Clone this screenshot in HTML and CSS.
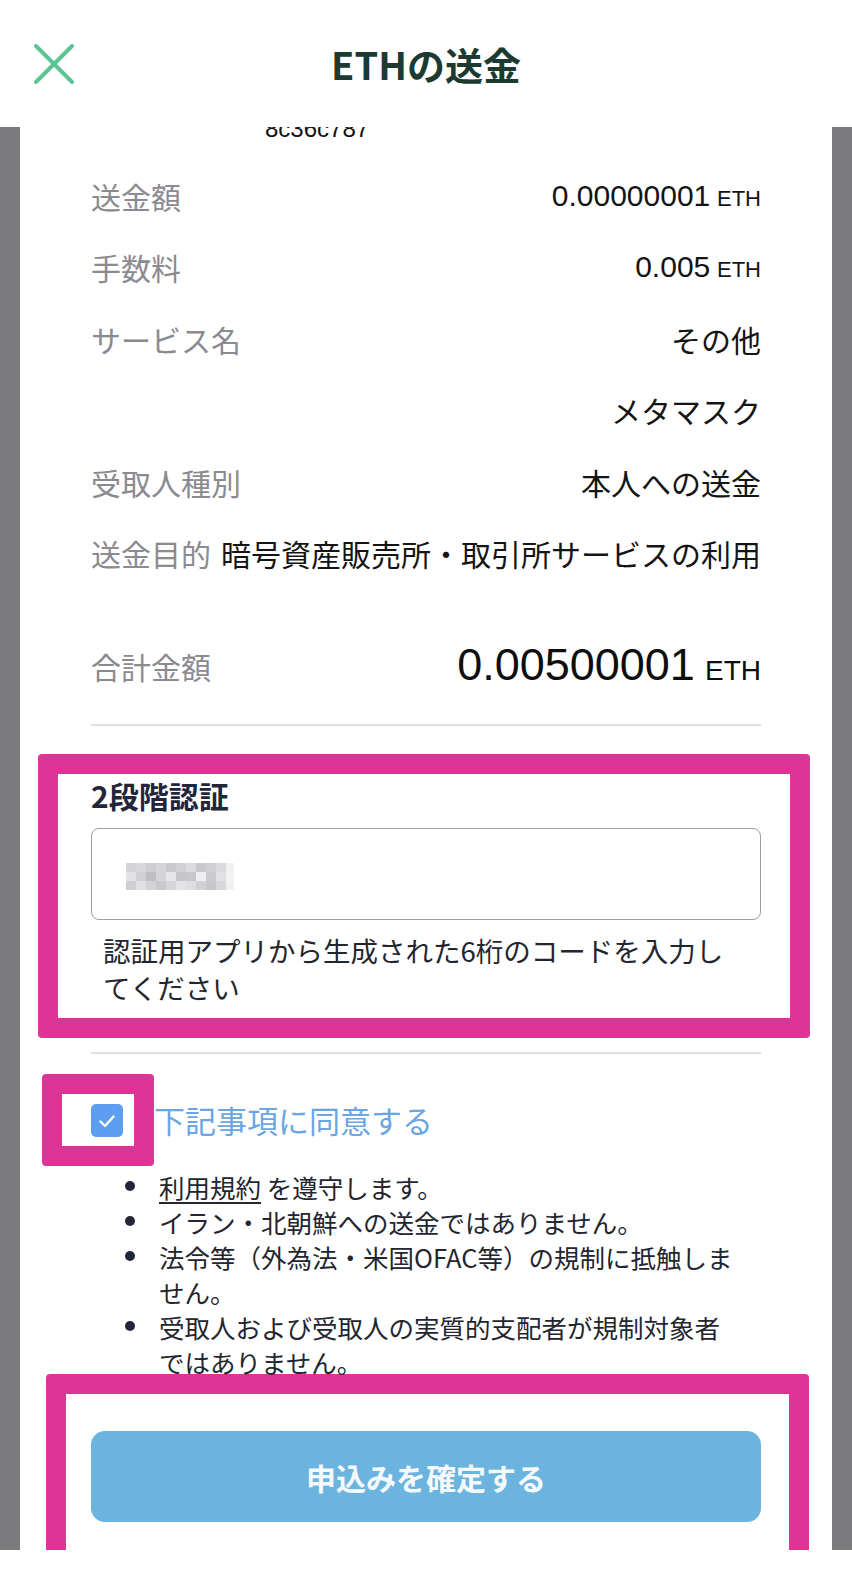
FILE: index.html
```html
<!DOCTYPE html>
<html lang="ja">

<head>
    <meta charset="UTF-8">
    <meta name="viewport" content="width=device-width, initial-scale=1.0">
    <title>ETHの送金</title>
    <link rel="stylesheet" href="styles.css">
</head>

<body>
    <header class="header">
        <button class="close-btn" aria-label="閉じる">
            <svg width="40" height="40" viewBox="0 0 40 40">
                <path d="M2 2 L38 38 M38 2 L2 38" stroke="#5cc596" stroke-width="4" stroke-linecap="round" fill="none"/>
            </svg>
        </button>
        <h1 class="title">ETHの送金</h1>
        <div></div>
    </header>

    <div class="backdrop">
        <div class="card">
            <div class="address num">8c36c787</div>

            <div class="details">
                <div class="row">
                    <span class="label">送金額</span>
                    <span class="value"><span class="num">0.00000001</span> <span class="unit">ETH</span></span>
                </div>
                <div class="row">
                    <span class="label">手数料</span>
                    <span class="value"><span class="num">0.005</span> <span class="unit">ETH</span></span>
                </div>
                <div class="row">
                    <span class="label">サービス名</span>
                    <span class="value">その他</span>
                </div>
                <div class="row">
                    <span class="label"></span>
                    <span class="value">メタマスク</span>
                </div>
                <div class="row">
                    <span class="label">受取人種別</span>
                    <span class="value">本人への送金</span>
                </div>
                <div class="row">
                    <span class="label">送金目的</span>
                    <span class="value">暗号資産販売所・取引所サービスの利用</span>
                </div>
            </div>

            <div class="row total-row">
                <span class="label">合計金額</span>
                <span class="total"><span class="num">0.00500001</span> <span class="unit">ETH</span></span>
            </div>

            <hr class="divider">

            <!-- highlighted: two factor -->
            <section class="mark mark-2fa">
                <div class="mark-inner">
                    <h2 class="section-title">2段階認証</h2>
                    <div class="code-input">
                        <svg class="pixels" width="108" height="27" viewBox="0 0 108 27">
                            <rect x="0" y="0" width="10" height="9" fill="#d4d4d8"/>
                            <rect x="10" y="0" width="10" height="9" fill="#d8d8db"/>
                            <rect x="20" y="0" width="10" height="9" fill="#cfcfd3"/>
                            <rect x="30" y="0" width="10" height="9" fill="#d6d6d9"/>
                            <rect x="40" y="0" width="10" height="9" fill="#c9c9cd"/>
                            <rect x="50" y="0" width="10" height="9" fill="#d2d2d6"/>
                            <rect x="60" y="0" width="10" height="9" fill="#dcdcdf"/>
                            <rect x="70" y="0" width="10" height="9" fill="#cacace"/>
                            <rect x="80" y="0" width="10" height="9" fill="#d0d0d4"/>
                            <rect x="90" y="0" width="10" height="9" fill="#dadadd"/>
                            <rect x="100" y="0" width="8" height="9" fill="#f1f1f2"/>
                            <rect x="0" y="9" width="10" height="9" fill="#e2e2e4"/>
                            <rect x="10" y="9" width="10" height="9" fill="#d0d0d4"/>
                            <rect x="20" y="9" width="10" height="9" fill="#bebec3"/>
                            <rect x="30" y="9" width="10" height="9" fill="#d4d4d8"/>
                            <rect x="40" y="9" width="10" height="9" fill="#e6e6e8"/>
                            <rect x="50" y="9" width="10" height="9" fill="#c6c6ca"/>
                            <rect x="60" y="9" width="10" height="9" fill="#c8c8cc"/>
                            <rect x="70" y="9" width="10" height="9" fill="#efeff0"/>
                            <rect x="80" y="9" width="10" height="9" fill="#cbcbcf"/>
                            <rect x="90" y="9" width="10" height="9" fill="#e1e1e3"/>
                            <rect x="100" y="9" width="8" height="9" fill="#f3f3f4"/>
                            <rect x="0" y="18" width="10" height="9" fill="#cfcfd3"/>
                            <rect x="10" y="18" width="10" height="9" fill="#e0e0e2"/>
                            <rect x="20" y="18" width="10" height="9" fill="#d3d3d7"/>
                            <rect x="30" y="18" width="10" height="9" fill="#c9c9cd"/>
                            <rect x="40" y="18" width="10" height="9" fill="#d6d6d9"/>
                            <rect x="50" y="18" width="10" height="9" fill="#e3e3e5"/>
                            <rect x="60" y="18" width="10" height="9" fill="#dedee0"/>
                            <rect x="70" y="18" width="10" height="9" fill="#d1d1d5"/>
                            <rect x="80" y="18" width="10" height="9" fill="#c7c7cb"/>
                            <rect x="90" y="18" width="10" height="9" fill="#d8d8db"/>
                            <rect x="100" y="18" width="8" height="9" fill="#f0f0f1"/>
                        </svg>
                    </div>
                    <p class="help">認証用アプリから生成された6桁のコードを入力し<br>てください</p>
                </div>
            </section>

            <hr class="divider divider-2">

            <div class="agree">
                <span class="mark mark-check">
                    <span class="mark-inner check-inner">
                        <span class="checkbox">
                            <svg width="20" height="20" viewBox="0 0 20 20">
                                <path d="M3.5 10.5 L8 15 L16.5 5.5" stroke="#fff" stroke-width="2.4" fill="none" stroke-linecap="round" stroke-linejoin="round"/>
                            </svg>
                        </span>
                    </span>
                </span>
                <span class="agree-label">下記事項に同意する</span>
            </div>

            <ul class="terms">
                <li><span><a href="#" class="terms-link">利用規約</a> を遵守します。</span></li>
                <li><span>イラン・北朝鮮への送金ではありません。</span></li>
                <li><span>法令等（外為法・米国OFAC等）の規制に抵触しません。</span></li>
                <li><span>受取人および受取人の実質的支配者が規制対象者ではありません。</span></li>
            </ul>

            <!-- highlighted: submit -->
            <div class="mark mark-submit">
                <div class="mark-inner submit-inner">
                    <button class="submit-btn">申込みを確定する</button>
                </div>
            </div>
        </div>
    </div>
    <div class="home-bar"></div>
</body>

</html>
```

FILE: styles.css
```css
body {
    margin: 0;
    padding: 0;
    background-color: #ffffff;
    font-family: "Noto Sans CJK JP", sans-serif;
    color: #141414;
}

.num {
    font-family: "Liberation Sans", "Noto Sans CJK JP", sans-serif;
}

/* header */
.header {
    position: relative;
    z-index: 1;
    height: 127px;
    background: #ffffff;
    display: grid;
    grid-template-columns: 1fr auto 1fr;
    align-items: center;
}

.close-btn {
    justify-self: start;
    margin-left: 34px;
    padding: 0;
    border: none;
    background: none;
    width: 40px;
    height: 40px;
}

.close-btn svg {
    display: block;
}

.title {
    margin: 0;
    font-size: 38px;
    font-weight: 700;
    line-height: 1;
    color: #1d3a30;
}

/* sheet */
.backdrop {
    height: 1435px;
    padding: 0 20px;
    background-color: #7a7a7c;
}

.card {
    height: 100%;
    box-sizing: border-box;
    padding: 0 71px;
    background: #ffffff;
}

.home-bar {
    height: 10px;
    background: #ffffff;
}

.address {
    margin-top: -12px;
    padding-left: 174px;
    font-size: 24px;
    line-height: 28px;
    color: #111;
}

.details {
    margin-top: 17px;
}

.row {
    display: flex;
    justify-content: space-between;
    align-items: center;
    height: 71.5px;
}

.label {
    font-size: 30px;
    line-height: 40px;
    color: #8a8a90;
    white-space: nowrap;
}

.value {
    font-size: 30px;
    line-height: 40px;
    color: #141414;
    text-align: right;
    white-space: nowrap;
}

.unit {
    font-family: "Liberation Sans", sans-serif;
    font-size: 22px;
}

.total-row {
    margin-top: 41px;
}

.total {
    font-size: 45px;
    line-height: 52px;
    color: #0e0e0e;
}

.total .unit {
    font-size: 28px;
}

.divider {
    margin: 22.5px 0 0;
    border: none;
    height: 2px;
    background: #e0e1e6;
}

.divider-2 {
    margin-top: 14px;
}

/* pink highlight frames */
.mark {
    display: block;
    border: 20px solid #dc3596;
    border-radius: 4px;
}

.mark-inner {
    background: #ffffff;
    border-radius: 4px;
}

.mark-2fa {
    margin: 28px -49px 0 -53px;
}

.mark-2fa .mark-inner {
    padding: 1px 29px 12.5px 33px;
}

.section-title {
    margin: 0;
    font-size: 30px;
    line-height: 40px;
    font-weight: 700;
    color: #23263a;
}

.code-input {
    margin-top: 13px;
    height: 92px;
    box-sizing: border-box;
    border: 1.5px solid #9c9ca3;
    border-radius: 8px;
    display: flex;
    align-items: center;
    padding-left: 34px;
}

.pixels {
    display: block;
    margin-top: 4px;
}

.help {
    margin: 11.5px 0 0;
    padding-left: 12px;
    font-size: 27.5px;
    line-height: 37px;
    color: #23252f;
    white-space: nowrap;
}

/* agree */
.agree {
    display: flex;
    align-items: center;
    margin: 20px 0 0 -49px;
}

.mark-check {
    display: inline-block;
}

.check-inner {
    display: block;
    padding: 10px 11px 9px 29px;
}

.checkbox {
    display: flex;
    align-items: center;
    justify-content: center;
    width: 32px;
    height: 33px;
    border-radius: 5px;
    background: #5c9ff0;
}

.agree-label {
    font-size: 31px;
    line-height: 40px;
    color: #6ba6e2;
}

.terms {
    list-style: none;
    margin: 2.5px 0 0;
    padding: 0 0 0 34px;
}

.terms li {
    display: flex;
    font-size: 25.5px;
    line-height: 35px;
    color: #23252f;
}

.terms li::before {
    content: "";
    flex: none;
    width: 10px;
    height: 10px;
    border-radius: 50%;
    background: #23263a;
    margin: 12.5px 24px 0 0;
}

.terms li span {
    max-width: 577px;
}

.terms-link {
    color: inherit;
    text-decoration: underline;
    text-underline-offset: 4px;
}

/* submit */
.mark-submit {
    margin: -4.5px -48px 0 -45px;
}

.submit-inner {
    padding: 37px 28px 28px 25px;
}

.submit-btn {
    display: block;
    width: 100%;
    height: 91px;
    border: none;
    border-radius: 14px;
    background: #6cb4e0;
    color: #f5f9fc;
    font-family: "Noto Sans CJK JP", sans-serif;
    font-size: 30px;
    font-weight: 700;
}
```
